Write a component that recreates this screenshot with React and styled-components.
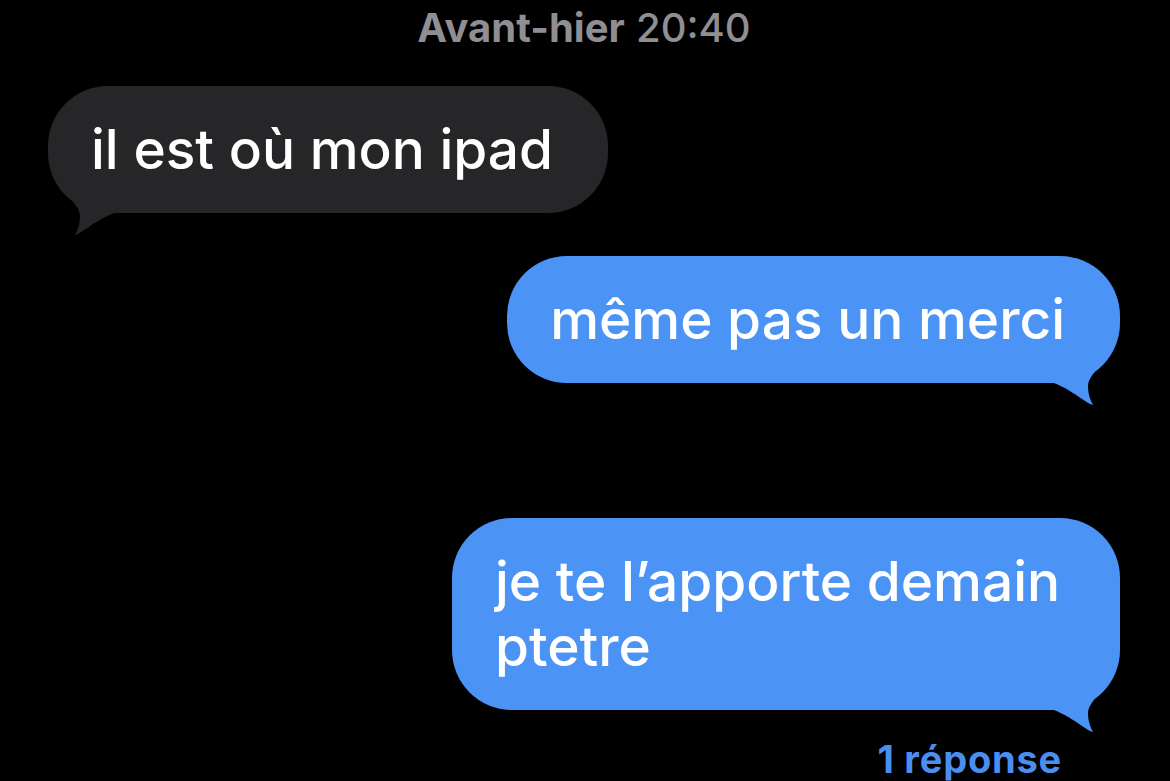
import React from 'react';
import styled, { createGlobalStyle } from 'styled-components';

const GlobalStyle = createGlobalStyle`
  html, body {
    margin: 0;
    background: #000;
  }
  body {
    font-family: Inter, "Noto Sans", sans-serif;
    -webkit-font-smoothing: antialiased;
  }
`;

const Thread = styled.main`
  width: 1170px;
  height: 781px;
  overflow: hidden;
  box-sizing: border-box;
  padding: 0 50px 0 48px;
  display: flex;
  flex-direction: column;
`;

const Stamp = styled.div`
  margin-top: 4px;
  text-align: center;
  color: #8e8e93;
  font-size: 40px;
  line-height: 48px;
  b {
    font-weight: 700;
  }
  span {
    font-weight: 500;
  }
`;

const Row = styled.div`
  display: flex;
  justify-content: ${(p) => (p.$mine ? 'flex-end' : 'flex-start')};
  margin-top: ${(p) => p.$gap}px;
`;

const Bubble = styled.div`
  position: relative;
  max-width: 668px;
  box-sizing: border-box;
  padding: 31px 55px 31px 43px;
  border-radius: 60px;
  background: ${(p) => (p.$mine ? '#4b94f6' : '#262628')};
  color: #fff;
  font-size: 55px;
  line-height: 65px;
  font-weight: 500;
`;

const TailSvg = styled.svg`
  position: absolute;
  bottom: -22px;
  width: 70px;
  height: 40px;
  ${(p) => (p.$mine ? 'right: 0;' : 'left: 0; transform: scaleX(-1);')}
`;

const Reply = styled.div`
  margin-top: 29px;
  align-self: flex-end;
  margin-right: 58px;
  color: #4a8ff0;
  font-size: 38px;
  line-height: 40px;
  font-weight: 700;
  letter-spacing: 0.8px;
`;

function Tail({ mine, color }) {
  return (
    <TailSvg $mine={mine} viewBox="0 0 70 40">
      <path
        d="M50 0 C44 8 38 14 38 21 C38 29 40 34 43 40 C35 38 24 26 4 18 L30 0 Z"
        fill={color}
      />
    </TailSvg>
  );
}

const messages = [
  { id: 1, mine: false, gap: 34, text: 'il est où mon ipad' },
  { id: 2, mine: true, gap: 43, text: 'même pas un merci' },
  { id: 3, mine: true, gap: 135, text: 'je te l’apporte demain ptetre' },
];

export default function App() {
  return (
    <>
      <GlobalStyle />
      <Thread>
        <Stamp>
          <b>Avant-hier</b> <span>20:40</span>
        </Stamp>
        {messages.map(({ id, mine, gap, text }) => (
          <Row key={id} $mine={mine} $gap={gap}>
            <Bubble $mine={mine}>
              {text}
              <Tail mine={mine} color={mine ? '#4b94f6' : '#262628'} />
            </Bubble>
          </Row>
        ))}
        <Reply>1 réponse</Reply>
      </Thread>
    </>
  );
}
